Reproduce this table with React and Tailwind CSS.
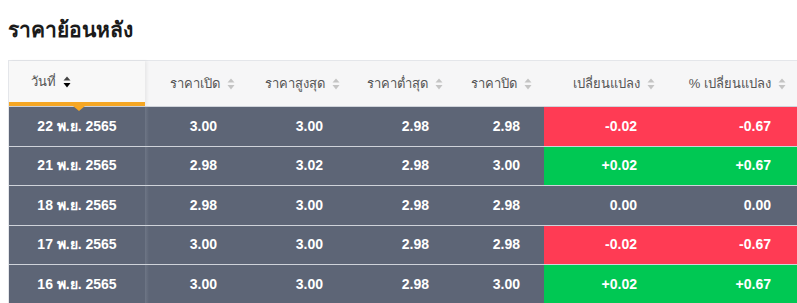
import React from "react";

// column layout: width, data padding-right, header label
const columns = [
  { key: "open", label: "ราคาเปิด", w: "w-[102px]", pr: "pr-[30px]" },
  { key: "high", label: "ราคาสูงสุด", w: "w-[105px]", pr: "pr-[29px]" },
  { key: "low", label: "ราคาต่ำสุด", w: "w-[103px]", pr: "pr-[26px]" },
  { key: "close", label: "ราคาปิด", w: "w-[89px]", pr: "pr-[24px]" },
  { key: "chg", label: "เปลี่ยนแปลง", w: "w-[123px]", pr: "pr-[30px]" },
  { key: "pct", label: "% เปลี่ยนแปลง", w: "w-[131px]", pr: "pr-[27px]" },
];

const rows = [
  { date: "22 พ.ย. 2565", open: "3.00", high: "3.00", low: "2.98", close: "2.98", chg: "-0.02", pct: "-0.67" },
  { date: "21 พ.ย. 2565", open: "2.98", high: "3.02", low: "2.98", close: "3.00", chg: "+0.02", pct: "+0.67" },
  { date: "18 พ.ย. 2565", open: "2.98", high: "3.00", low: "2.98", close: "2.98", chg: "0.00", pct: "0.00" },
  { date: "17 พ.ย. 2565", open: "3.00", high: "3.00", low: "2.98", close: "2.98", chg: "-0.02", pct: "-0.67" },
  { date: "16 พ.ย. 2565", open: "3.00", high: "3.00", low: "2.98", close: "3.00", chg: "+0.02", pct: "+0.67" },
];

const SortIcon = ({ active }) => (
  <svg width="8" height="12" viewBox="0 0 8 12" className="ml-[7px] shrink-0">
    <path d="M4 0.5 L7.5 4.5 H0.5 Z" fill={active ? "#444" : "#c4c4c4"} />
    <path d="M4 11.5 L7.5 7 H0.5 Z" fill={active ? "#000" : "#c4c4c4"} />
  </svg>
);

const changeBg = (v) => {
  if (v.startsWith("+")) return "bg-[#00c853]";
  if (v.startsWith("-")) return "bg-[#ff3b54]";
  return "";
};

export default function App() {
  return (
    <div className="w-[797px] h-[303px] overflow-hidden bg-white font-['Liberation_Sans','Noto_Sans',sans-serif]">
      <h2 className="pl-[8px] pt-[16px] h-[60px] text-[21px] font-bold text-[#1a1a1a] leading-[28px]">
        ราคาย้อนหลัง
      </h2>
      <div className="ml-[8px] w-[900px] border-t border-l border-[#e4e6ea]">
        {/* header */}
        <div className="flex h-[45px] bg-[#f6f6f7] text-[13px] text-[#555]">
          <div className="relative w-[136px] shrink-0 flex items-center pl-[22px] pb-[4px] bg-[#f8f8f8] shadow-[2px_0_3px_rgba(0,0,0,0.06)]">
            <span>วันที่</span>
            <SortIcon active />
            <div className="absolute left-0 right-0 bottom-0 h-[4px] bg-[#f5a623]" />
          </div>
          {columns.map((c) => (
            <div key={c.key} className={`${c.w} shrink-0 flex items-center justify-end pr-[12px]`}>
              <span>{c.label}</span>
              <SortIcon />
            </div>
          ))}
        </div>
        {/* body */}
        {rows.map((r, i) => (
          <div key={r.date} className="flex h-[39.5px] border-t border-[#cfd3da] bg-[#5d6576] text-[14px] font-bold text-white">
            <div className="relative w-[136px] shrink-0 flex items-center justify-center">
              {r.date}
              {i === 0 && (
                <div className="absolute top-[-1px] left-[64px] w-0 h-0 border-l-[6px] border-r-[6px] border-t-[5px] border-l-transparent border-r-transparent border-t-[#f5a623]" />
              )}
            </div>
            <div className="w-[4px] shrink-0 bg-gradient-to-r from-[#6e7686] to-[#5d6576]" />
            {columns.map((c, j) => (
              <div
                key={c.key}
                className={`${j === 0 ? "w-[98px]" : c.w} shrink-0 flex items-center justify-end ${c.pr} ${
                  c.key === "chg" || c.key === "pct" ? changeBg(r.chg) : ""
                }`}
              >
                {r[c.key]}
              </div>
            ))}
          </div>
        ))}
      </div>
    </div>
  );
}
